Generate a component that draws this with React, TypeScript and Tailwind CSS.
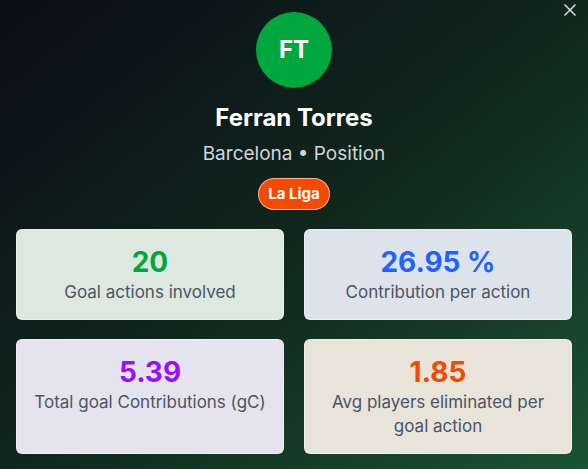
import React from 'react';
import { X } from 'lucide-react';

interface StatCardProps {
  value: string;
  label: string;
  valueClass: string;
  bgClass: string;
}

const StatCard: React.FC<StatCardProps> = ({ value, label, valueClass, bgClass }) => (
  <div className={`rounded-md border border-white/40 px-3 py-[15px] text-center ${bgClass}`}>
    <div className={`text-[28px] font-bold leading-[35px] ${valueClass}`}>{value}</div>
    <div className="text-[17px] leading-6 text-[#4b5563]">{label}</div>
  </div>
);

const stats: StatCardProps[] = [
  { value: '20', label: 'Goal actions involved', valueClass: 'text-[#00a63e]', bgClass: 'bg-[#dce8e0]' },
  { value: '26.95 %', label: 'Contribution per action', valueClass: 'text-[#1e63ff]', bgClass: 'bg-[#dde3ea]' },
  { value: '5.39', label: 'Total goal Contributions (gC)', valueClass: 'text-[#9810fa]', bgClass: 'bg-[#e4e3ee]' },
  { value: '1.85', label: 'Avg players eliminated per goal action', valueClass: 'text-[#f54900]', bgClass: 'bg-[#e8e4da]' },
];

export default function App() {
  return (
    <div
      className="relative h-[469px] w-[588px] overflow-hidden bg-gradient-to-br from-[#0a0e16] via-[#10261d] to-[#1a5432] font-['Inter',sans-serif]"
    >
      <button className="absolute right-2 top-0 text-[#d1d5db]">
        <X className="h-5 w-5" strokeWidth={2} />
      </button>

      <div className="flex flex-col items-center pt-3">
        <div className="flex h-[76px] w-[76px] items-center justify-center rounded-full bg-[#00a63e] text-2xl font-bold text-white">
          FT
        </div>
        <div className="mt-[14px] text-2xl font-bold leading-8 text-white">Ferran Torres</div>
        <div className="mt-[6px] text-[19px] leading-7 text-[#d1d5db]">Barcelona • Position</div>
        <div className="mt-[10px] rounded-full border border-white/60 bg-[#f54900] px-[9px] py-[6px] text-[15px] font-bold leading-[18px] text-white">
          La Liga
        </div>
      </div>

      <div className="mt-[19px] grid grid-cols-2 gap-x-5 gap-y-[19px] px-4">
        {stats.map((s) => (
          <StatCard key={s.value} {...s} />
        ))}
      </div>
    </div>
  );
}
